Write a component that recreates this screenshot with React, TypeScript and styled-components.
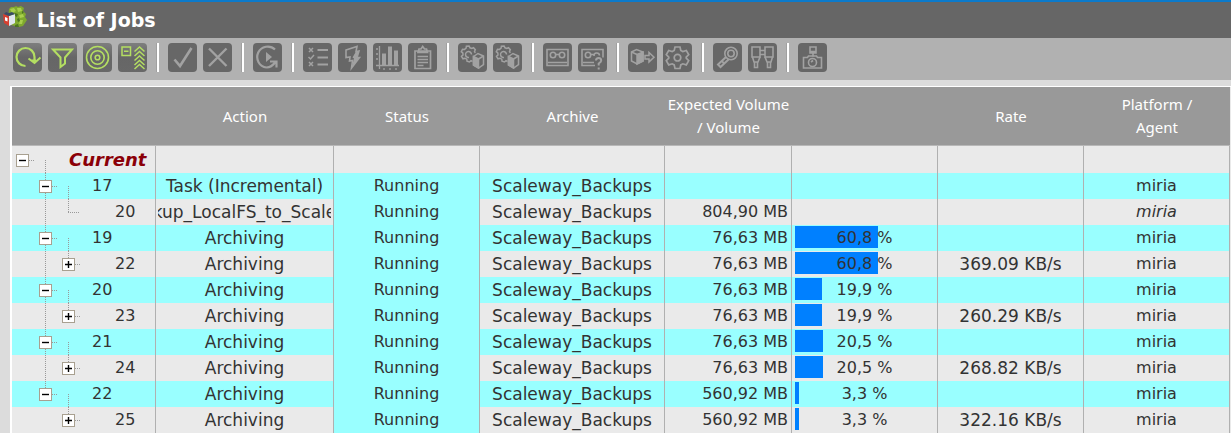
import React from "react";
import styled, { createGlobalStyle, css } from "styled-components";

const GlobalStyle = createGlobalStyle`
  * { box-sizing: border-box; }
  body {
    margin: 0;
    background: #dcdcdc;
    color: #333;
    font-family: "DejaVu Sans", Verdana, sans-serif;
    font-size: 16px;
  }
`;

const Page = styled.div`
  min-height: 100vh;
  display: flex;
  flex-direction: column;
  overflow-x: hidden;
`;

const TitleBar = styled.header`
  display: flex;
  align-items: center;
  gap: 10px;
  height: 38px;
  padding-left: 3px;
  border-top: 2px solid #0b7acb;
  background: #666;
`;

const LogoMark = styled.svg`
  align-self: flex-start;
  margin-top: 3px;
`;

const Title = styled.h1`
  margin: 0;
  color: #fff;
  font-size: 19px;
  line-height: 24px;
`;

const Toolbar = styled.div`
  display: flex;
  align-items: center;
  height: 42px;
  padding: 0 13px 4px;
  background: #b1b1b1;
`;

const ToolGroup = styled.div`
  display: flex;
  gap: 6px;

  & + & {
    margin-left: 10px;
    padding-left: 9px;
    border-left: 2px solid #fff;
    box-shadow: -1px 0 #a0a0a0;
  }
`;

const ToolButton = styled.button<{ $active?: boolean }>`
  width: 29px;
  height: 29px;
  padding: 0;
  border: 0;
  border-radius: 4px;
  color: ${(p) => (p.$active ? "#b4de62" : "#a2a2a2")};
  background: ${(p) =>
    p.$active ? "linear-gradient(#7e7e7e, #666 50%, #686868)" : "#676767"};

  svg {
    display: block;
    fill: none;
    stroke: currentColor;
    stroke-width: 2;
  }
`;

const Panel = styled.main`
  flex: 1;
  margin: 6px 0 0 10px;
  padding-right: 1px;
  border-top: 1px solid #fff;
  border-left: 2px solid #fff;
  background: #eaeaea;
`;

const Grid = styled.table`
  width: 100%;
  table-layout: fixed;
  border-collapse: separate;
  border-spacing: 0;
`;

const Col = styled.col<{ $width?: number }>`
  ${(p) => p.$width && css`width: ${p.$width}px;`}
`;

const HeadCell = styled.th`
  height: 59px;
  padding: 0;
  border-bottom: 1px solid #b8b8b8;
  background: #999;
  color: #fff;
  font: 400 15px/23px "Noto Sans", sans-serif;
  white-space: pre-line;
`;

const Row = styled.tr<{ $cyan?: boolean; $group?: boolean }>`
  height: ${(p) => (p.$group ? 27 : 26)}px;
  background: ${(p) => (p.$cyan ? "#99ffff" : "#eaeaea")};
`;

const Cell = styled.td<{
  $align?: "right";
  $cyan?: boolean;
  $italic?: boolean;
  $large?: boolean;
}>`
  padding: 0 ${(p) => (p.$align ? 3 : 2)}px;
  border-right: 1px solid #b0b0b0;
  overflow: hidden;
  font-size: ${(p) => (p.$large ? 17 : 16)}px;
  line-height: 26px;
  white-space: nowrap;
  text-align: ${(p) => p.$align ?? "center"};
  font-style: ${(p) => (p.$italic ? "italic" : "normal")};
  ${(p) => p.$cyan && css`background: #99ffff;`}
`;

const TreeCell = styled(Cell)`
  padding: 0;
  vertical-align: bottom;
`;

const Clipped = styled.span`
  display: flex;
  justify-content: center;
  overflow: hidden;
`;

const Branch = styled.div`
  display: flex;
  align-items: center;
  height: 26px;
`;

const Slot = styled.span`
  display: grid;
  flex: none;
  width: 23px;

  > * {
    grid-area: 1 / 1;
  }
`;

const Guide = styled.svg`
  display: block;
  stroke: #999;
  stroke-dasharray: 1 1;
`;

const Expander = styled.button`
  align-self: center;
  width: 13px;
  height: 13px;
  margin-left: 4px;
  padding: 0;
  border: 1px solid #a8a090;
  background: #fff;

  svg {
    display: block;
    stroke: #000;
    stroke-width: 1.4;
  }
`;

const JobId = styled.span<{ $group?: boolean }>`
  margin-left: 11px;
  ${(p) =>
    p.$group &&
    css`
      color: #8b0008;
      font-size: 18px;
      font-weight: 700;
      font-style: italic;
    `}
`;

const Meter = styled.div`
  display: grid;
  height: 26px;

  > * {
    grid-area: 1 / 1;
  }
`;

const MeterTrack = styled.div`
  margin: 1px 4px 3px 1px;
`;

const MeterFill = styled.div`
  height: 100%;
  background: #0080ff;
`;

type Tool = { label: string; icon: React.ReactNode; active?: boolean };

const cubes = (
  <g strokeWidth="1.5">
    <path d="M14.500 18.500l-1.500-.8-1.500 1.300-2.500-.8-.2-2-1.800-1-2 .6-1.500-2.400 1.500-1.500-.2-2-1.500-1.200 1.200-2.500 2 .2 1.600-1.200.3-2 2.700-.2.900 1.800 1.800.7 1.700-.8 1.800 2-.8 1.700.8 1.400" />
    <path d="M13.500 11.500a3 3 0 1 0-2.500 3" />
    <path d="M15.500 13.500l4.500-3 5.500 2.500v8.500l-5 3.500-5-3z" fill="#676767" />
    <path d="M15.500 13.500l5 2.500v9l-5-3z" fill="currentColor" />
    <path d="M20.500 16l5-3" />
  </g>
);

const toolGroups: Tool[][] = [
  [
    {
      label: "Refresh",
      active: true,
      icon: (
        <>
          <path d="M12.500 23A9 9 0 1 1 21.500 14v5" strokeWidth="2.200" />
          <path d="M15.500 15.500l6 4.500 6-5.500M18 17.500h5" />
        </>
      ),
    },
    {
      label: "Filter",
      active: true,
      icon: <path d="M5 6.500h19l-7 8v6l-4.500 3.500v-9.500z" />,
    },
    {
      label: "Target",
      active: true,
      icon: (
        <g strokeWidth="1.600">
          <circle cx="14.500" cy="14.500" r="11" />
          <circle cx="14.500" cy="14.500" r="6.700" />
          <circle cx="14.500" cy="14.500" r="2.300" />
        </g>
      ),
    },
    {
      label: "Collapse all",
      active: true,
      icon: (
        <g strokeWidth="1.500">
          <path d="M4 4h8.500v8.500H4zM6 8.200h4.500" />
          <path d="M16.500 8.500l5-4.500 5 4.500M16.500 13l5-4.500 5 4.500M16.500 17.500l5-4.500 5 4.500M16.500 22l5-4.500 5 4.500M16.500 26l5-4.500 5 4.500" />
        </g>
      ),
    },
  ],
  [
    { label: "Validate", icon: <path d="M6.500 16.500l5.500 6.500L23.500 5" strokeWidth="2.600" /> },
    { label: "Cancel", icon: <path d="M6 5.500l17.500 17.500M23.500 5.500L6 23" strokeWidth="2.400" /> },
  ],
  [
    {
      label: "Restart",
      icon: (
        <>
          <path d="M22 6.500A10.500 10.500 0 1 0 13.500 24.500M13.500 24.500q5 0 9-5.500M17 18.500h6.500v6" strokeWidth="2.200" />
          <path d="M13 9l6 5-6 5z" fill="currentColor" stroke="none" />
        </>
      ),
    },
  ],
  [
    {
      label: "Task list",
      icon: (
        <g strokeWidth="1.500">
          <path d="M6 5l4 4M10 5L6 9M5.500 14l2 2 3.500-4M6 19l4 4M10 19l-4 4" />
          <path d="M14.500 7h10.500M14.500 14.500h10.500M14.500 21.500h10.500" strokeWidth="1.800" />
        </g>
      ),
    },
    {
      label: "Run",
      icon: (
        <>
          <path d="M8 7l11-3.500-1 5 3-.5-2 6.500h2.500L13.500 25l1-7.500-3 .5.500-4-4 .5z" strokeWidth="1.600" />
          <path d="M18 8.500l3-.5-2 6.500h2.500L13.500 25l2.500-9.500-1.500-1z" fill="currentColor" stroke="none" />
        </>
      ),
    },
    {
      label: "Statistics",
      icon: (
        <>
          <path d="M6.500 3v23M3 22.500h23" strokeWidth="1.300" />
          <path d="M3 6h2M3 11h2M3 16h2M11 25v2M17 25v2M23 25v2" strokeWidth="1.300" />
          <path d="M9 10.500h4V22H9zM15 3.500h4V22h-4zM21 7.500h4V22h-4z" fill="currentColor" stroke="none" />
        </>
      ),
    },
    {
      label: "Report",
      icon: (
        <g strokeWidth="1.700">
          <path d="M7 8h15.500v17.500H7zM10 9.500l1-3.500h2l1.700-2.500L16.500 6h2l1 3.500z" />
          <path d="M9.500 13.500h10.500M9.500 16.500h10.500M9.500 19.500h10.500M9.500 22.500h6" strokeWidth="1.300" />
        </g>
      ),
    },
  ],
  [
    { label: "Object processing", icon: cubes },
    { label: "Object settings", icon: cubes },
  ],
  [
    {
      label: "Media",
      icon: (
        <g strokeWidth="1.600">
          <path d="M4 6.500h21v16H4zM5 19.500h19M12 11.500h5" />
          <circle cx="10" cy="12" r="2.700" />
          <circle cx="19" cy="12" r="2.700" />
        </g>
      ),
    },
    {
      label: "Media request",
      icon: (
        <g strokeWidth="1.600">
          <path d="M17 22.500H4v-16h21v8M5 19.500h11M12 11.500h4" />
          <circle cx="10" cy="12" r="2.700" />
          <path d="M16 13a2.700 2.700 0 0 1 5.500-.5" />
          <path d="M18 17.500q0-2.500 2.700-2.500 2.500 0 2.500 2.500 0 1.500-2.500 3v2M20.700 24.500v2" strokeWidth="2" />
        </g>
      ),
    },
  ],
  [
    {
      label: "Export",
      icon: (
        <g strokeWidth="1.500">
          <path d="M3.500 9l5-2.500L15 9v9l-6 3-5.500-3z" />
          <path d="M9 11.500L15 9v9l-6 3z" fill="currentColor" />
          <path d="M3.500 9L9 11.500" />
          <path d="M17 12.500h4V9.500l5 4.700-5 4.700v-3h-4z" />
        </g>
      ),
    },
    {
      label: "Settings",
      icon: (
        <g strokeWidth="1.700">
          <path d="M12 4h5l.8 3.500 2 1.100 3.500-1.100 2.400 4.200-2.500 2.500v1l2.500 2.500-2.400 4.200-3.500-1.100-2 1.100L17 25.500h-5l-.8-3.600-2-1.100-3.500 1.100-2.400-4.200 2.500-2.500v-1l-2.500-2.500 2.400-4.200 3.500 1.100 2-1.100z" />
          <circle cx="14.500" cy="14.700" r="3.300" />
        </g>
      ),
    },
  ],
  [
    {
      label: "Search",
      icon: (
        <g strokeWidth="1.600">
          <circle cx="18" cy="10.500" r="6.200" />
          <circle cx="18" cy="10.500" r="3.200" />
          <path d="M13 14l-8 7.500 2.500 2.500 8-7.500M9 18l2 2.500" strokeWidth="2" />
        </g>
      ),
    },
    {
      label: "Find",
      icon: (
        <g strokeWidth="1.600">
          <path d="M4 4h8v10H4zM17 4h8v10h-8zM12 7.500h5M12 11.500h5" />
          <path d="M4.500 14l1.500 5h4l2-5M17 14l2 5h4l1.500-5M6.500 19v5.500h3V19M19.500 19v5.500h3V19" />
        </g>
      ),
    },
  ],
  [
    {
      label: "Snapshot",
      icon: (
        <g strokeWidth="1.600">
          <path d="M12 4h6v6h-6zM12 8.500h6M15 10v3.500" />
          <path d="M5.500 14.500h4l1-1.500h8l1 1.500h4v10.500h-18z" />
          <circle cx="14.500" cy="19.500" r="4" />
          <path d="M13 19l2-1.500" />
        </g>
      ),
    },
  ],
];

type GuideKind = "none" | "up" | "down" | "through" | "elbow";

type Job = {
  id: string;
  level: 0 | 1 | 2;
  open?: boolean;
  guides: GuideKind[];
  action?: string;
  volume?: string;
  percent?: number;
  rate?: string;
  italicAgent?: boolean;
};

const parent: GuideKind[] = ["none", "through", "down"];
const child: GuideKind[] = ["none", "through", "up", "none"];

const jobs: Job[] = [
  { id: "Current", level: 0, open: true, guides: ["none", "down"] },
  { id: "17", level: 1, open: true, guides: parent, action: "Task (Incremental)" },
  {
    id: "20",
    level: 2,
    guides: ["none", "through", "elbow", "none"],
    action: "kup_LocalFS_to_Scale",
    volume: "804,90 MB",
    italicAgent: true,
  },
  { id: "19", level: 1, open: true, guides: parent, action: "Archiving", volume: "76,63 MB", percent: 60.8 },
  { id: "22", level: 2, open: false, guides: child, action: "Archiving", volume: "76,63 MB", percent: 60.8, rate: "369.09 KB/s" },
  { id: "20", level: 1, open: true, guides: parent, action: "Archiving", volume: "76,63 MB", percent: 19.9 },
  { id: "23", level: 2, open: false, guides: child, action: "Archiving", volume: "76,63 MB", percent: 19.9, rate: "260.29 KB/s" },
  { id: "21", level: 1, open: true, guides: parent, action: "Archiving", volume: "76,63 MB", percent: 20.5 },
  { id: "24", level: 2, open: false, guides: child, action: "Archiving", volume: "76,63 MB", percent: 20.5, rate: "268.82 KB/s" },
  { id: "22", level: 1, open: true, guides: ["none", "up", "down"], action: "Archiving", volume: "560,92 MB", percent: 3.3 },
  { id: "25", level: 2, open: false, guides: ["none", "none", "up", "none"], action: "Archiving", volume: "560,92 MB", percent: 3.3, rate: "322.16 KB/s" },
];

const guidePaths: Record<GuideKind, string> = {
  none: "",
  up: "M10.500 0V13",
  down: "M10.500 13V26",
  through: "M10.500 0V26",
  elbow: "M10.500 0V13M10 13.500H22",
};

function Tree({ job }: { job: Job }) {
  return (
    <Branch>
      {job.guides.map((kind, i) => {
        const hasBox = i === job.level && job.open !== undefined;
        return (
          <Slot key={i}>
            <Guide width="23" height="26" aria-hidden="true">
              <path d={guidePaths[kind] + (hasBox ? "M17 13.500H23" : "")} />
            </Guide>
            {hasBox && (
              <Expander type="button" aria-label={job.open ? "Collapse" : "Expand"}>
                <svg width="11" height="11">
                  <path d={job.open ? "M2 5.500H9" : "M2 5.500H9M5.500 2V9"} />
                </svg>
              </Expander>
            )}
          </Slot>
        );
      })}
      <JobId $group={job.level === 0}>{job.id}</JobId>
    </Branch>
  );
}

function Logo() {
  return (
    <LogoMark width="24" height="24" viewBox="0 0 24 24" aria-hidden="true">
      <path
        d="M6 4l2-2 3 0 2-1 2 1 3-1 3 2-1 3 3 3-1 3 2 3-2 3-2 3-4 1-4-1-4-1-3-6z"
        fill="#7fa92e"
      />
      <path d="M7 4l4-1 2 3-4 2zM14 3l4 0 1 3-4 1zM16 10l4-1 1 3-4 1zM17 15l3 0-1 4-3 0z" fill="#a9cf4c" />
      <path d="M12 8l3 1-1 3-2-1zM19 6l2 1-2 2zM14 14l2-1 1 3-2 1zM12 20l3-1 1 3-4 0z" fill="#4b7420" />
      <path d="M0 9l6 2v10l-5-3z" fill="#d63f30" />
      <path d="M6 11l6-2v9l-6 3z" fill="#dfe6ec" />
      <path d="M2 12l2.500 1v3.500L2 15.500z" fill="#fff" />
      <path d="M1 9l5 2 6-2-3-2-3 1-3-1z" fill="#3a4c66" />
    </LogoMark>
  );
}

const columns: { title: string; width?: number }[] = [
  { title: "", width: 144 },
  { title: "Action", width: 178 },
  { title: "Status", width: 146 },
  { title: "Archive", width: 185 },
  { title: "Expected Volume\n/ Volume", width: 127 },
  { title: "", width: 146 },
  { title: "Rate", width: 146 },
  { title: "Platform /\nAgent" },
];

export default function App() {
  return (
    <Page>
      <GlobalStyle />
      <TitleBar>
        <Logo />
        <Title>List of Jobs</Title>
      </TitleBar>
      <Toolbar role="toolbar" aria-label="Job actions">
        {toolGroups.map((group, i) => (
          <ToolGroup key={i}>
            {group.map((tool) => (
              <ToolButton key={tool.label} type="button" aria-label={tool.label} $active={tool.active}>
                <svg width="29" height="29" viewBox="0 0 29 29">{tool.icon}</svg>
              </ToolButton>
            ))}
          </ToolGroup>
        ))}
      </Toolbar>
      <Panel>
        <Grid>
          <colgroup>
            {columns.map((c, i) => (
              <Col key={i} $width={c.width} />
            ))}
          </colgroup>
          <thead>
            <tr>
              {columns.map((c, i) => (
                <HeadCell key={i} scope="col">{c.title}</HeadCell>
              ))}
            </tr>
          </thead>
          <tbody>
            {jobs.map((job, i) => {
              const real = job.level > 0;
              return (
                <Row key={i} $cyan={job.level === 1} $group={!real}>
                  <TreeCell><Tree job={job} /></TreeCell>
                  <Cell $large><Clipped>{job.action}</Clipped></Cell>
                  <Cell $cyan={real}>{real && "Running"}</Cell>
                  <Cell $large>{real && "Scaleway_Backups"}</Cell>
                  <Cell $align="right">{job.volume}</Cell>
                  <Cell>
                    {job.percent !== undefined && (
                      <Meter>
                        <MeterTrack>
                          <MeterFill style={{ width: `${job.percent}%` }} />
                        </MeterTrack>
                        <span>{job.percent.toFixed(1).replace(".", ",")} %</span>
                      </Meter>
                    )}
                  </Cell>
                  <Cell $large>{job.rate}</Cell>
                  <Cell $italic={job.italicAgent}>{real && "miria"}</Cell>
                </Row>
              );
            })}
          </tbody>
        </Grid>
      </Panel>
    </Page>
  );
}
